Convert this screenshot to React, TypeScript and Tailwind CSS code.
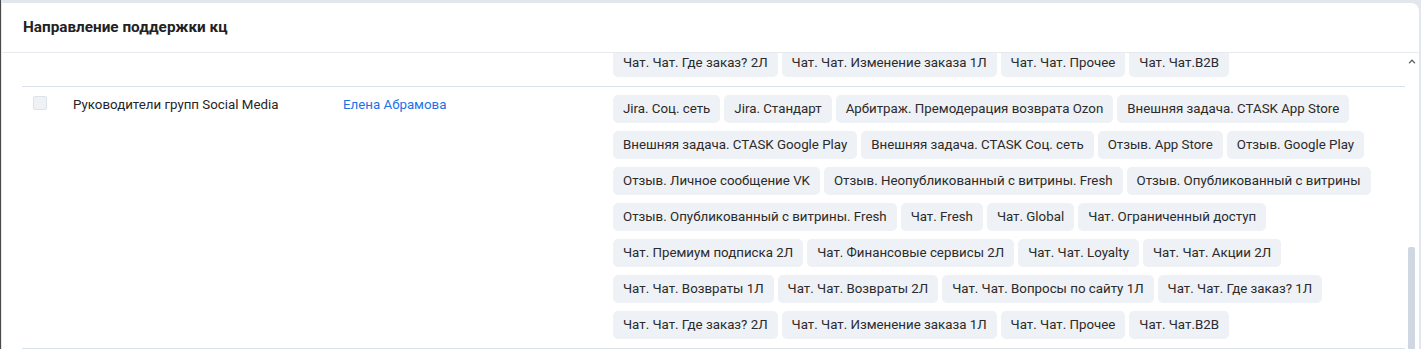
import React, { useLayoutEffect, useRef } from "react";

const TAGS = [
  "Jira. Соц. сеть",
  "Jira. Стандарт",
  "Арбитраж. Премодерация возврата Ozon",
  "Внешняя задача. CTASK App Store",
  "Внешняя задача. CTASK Google Play",
  "Внешняя задача. CTASK Соц. сеть",
  "Отзыв. App Store",
  "Отзыв. Google Play",
  "Отзыв. Личное сообщение VK",
  "Отзыв. Неопубликованный с витрины. Fresh",
  "Отзыв. Опубликованный с витрины",
  "Отзыв. Опубликованный с витрины. Fresh",
  "Чат. Fresh",
  "Чат. Global",
  "Чат. Ограниченный доступ",
  "Чат. Премиум подписка 2Л",
  "Чат. Финансовые сервисы 2Л",
  "Чат. Чат. Loyalty",
  "Чат. Чат. Акции 2Л",
  "Чат. Чат. Возвраты 1Л",
  "Чат. Чат. Возвраты 2Л",
  "Чат. Чат. Вопросы по сайту 1Л",
  "Чат. Чат. Где заказ? 1Л",
  "Чат. Чат. Где заказ? 2Л",
  "Чат. Чат. Изменение заказа 1Л",
  "Чат. Чат. Прочее",
  "Чат. Чат.B2B",
];

type RowProps = { name: string; user: string; rowRef?: React.Ref<HTMLDivElement> };

function Row({ name, user, rowRef }: RowProps) {
  return (
    <div ref={rowRef} className="flex border-b border-[#d9e0e8] pt-2 pb-[9px]">
      <div className="w-[51px] shrink-0 pl-[11px]">
        <div className="w-[14px] h-[14px] mt-px rounded-[2px] bg-[#eef1f5] border border-[#dde2e9]" />
      </div>
      <div className="w-[270px] shrink-0 text-[13.3px] leading-5 text-[#262626]">{name}</div>
      <div className="w-[270px] shrink-0 text-[13.3px] leading-5 text-[#1a73e8]">{user}</div>
      <div className="flex flex-wrap gap-x-1 gap-y-2 w-[785px] content-start">
        {TAGS.map((t) => (
          <span
            key={t}
            className="h-7 px-[10px] flex items-center rounded-[5px] bg-[#eef1f5] text-[13.3px] text-[#2b2b2b] whitespace-nowrap"
          >
            {t}
          </span>
        ))}
      </div>
    </div>
  );
}

export default function App() {
  const scrollRef = useRef<HTMLDivElement>(null);
  const row2Ref = useRef<HTMLDivElement>(null);

  useLayoutEffect(() => {
    const s = scrollRef.current;
    const r = row2Ref.current;
    if (s && r) {
      const delta = r.getBoundingClientRect().top - s.getBoundingClientRect().top;
      s.scrollTop = s.scrollTop + delta - 33;
    }
  }, []);

  return (
    <div
      className="w-[1421px] h-[349px] overflow-hidden bg-[#e2e7ed] pt-[3px] pl-px border-l border-[#4a4a4a]"
      style={{ fontFamily: "Roboto, 'Noto Sans', Arial, sans-serif" }}
    >
      <div className="w-[1417px] h-[400px] bg-white rounded-tr-[8px] flex flex-col">
        <div className="h-[50px] flex items-center pl-[21px] border-b border-[#e6eaef] shrink-0">
          <span className="text-[15.3px] font-bold text-[#222]">Направление поддержки кц</span>
        </div>
        <div className="flex flex-1 min-h-0">
          <div ref={scrollRef} className="relative flex-1 overflow-hidden pl-5 h-[296px]">
            <div className="w-[1383px]">
              <Row name="Руководители групп Social Media" user="Елена Абрамова" />
              <Row name="Руководители групп Social Media" user="Елена Абрамова" rowRef={row2Ref} />
            </div>
          </div>
          <div className="w-[14px] shrink-0 flex flex-col pl-[3px] h-[296px]">
            <div className="h-[16px] flex items-center justify-center w-[8px]">
              <svg width="8" height="6" viewBox="0 0 8 6">
                <path d="M0.5 5 L4 1.2 L7.5 5 L6.3 5.4 L4 3 L1.7 5.4 Z" fill="#555" />
              </svg>
            </div>
            <div className="flex-1" />
            <div className="w-[7px] h-[102px] bg-[#cfd8e2] rounded-t-[2px]" />
          </div>
        </div>
      </div>
    </div>
  );
}
